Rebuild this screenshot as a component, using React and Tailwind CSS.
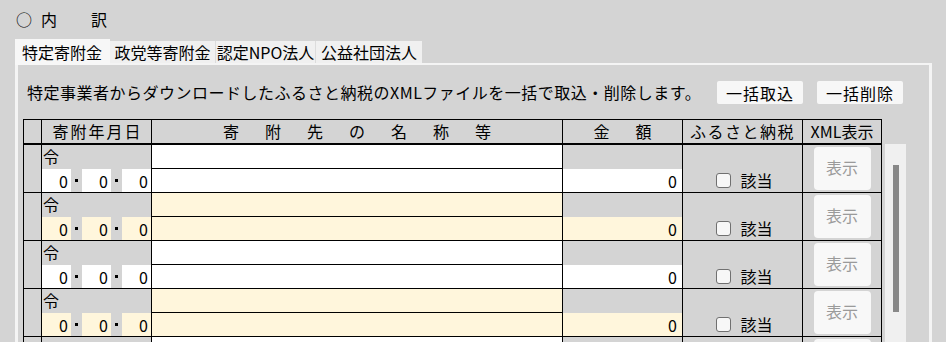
import React from 'react';

const font = { fontFamily: '"Noto Sans CJK JP", "Noto Sans", sans-serif' };

function DateInputs({ cream, empty }) {
  const box = cream ? 'bg-[#fff6dc]' : 'bg-white';
  const Box = () => (
    <div className={`w-[29px] h-full ${box} flex items-center justify-end pr-[3px] text-[16px] leading-none`}>{empty ? '' : '0'}</div>
  );
  const Dot = () => (
    <div className="w-[11px] h-full flex items-center justify-center">
      <span className="block w-[3px] h-[3px] bg-black" />
    </div>
  );
  return (
    <div className="flex h-[23px]">
      <Box />
      <Dot />
      <Box />
      <Dot />
      <Box />
    </div>
  );
}

function Row({ cream, empty }) {
  const fill = cream ? 'bg-[#fff6dc]' : 'bg-white';
  return (
    <div className="flex h-[48px] border-b border-black">
      <div className="w-[18px] border-r border-black" />
      <div className="w-[110px] border-r border-black flex flex-col">
        <div className="h-[24px] pl-[1px] text-[16px] leading-[22px]">{empty ? '' : '令'}</div>
        <DateInputs cream={cream} empty={empty} />
      </div>
      <div className="w-[411px] border-r border-black flex flex-col">
        <div className={`h-[24px] border-b border-black ${fill}`} />
        <div className={`h-[23px] ${fill}`} />
      </div>
      <div className="w-[120px] border-r border-black flex flex-col">
        <div className="h-[24px]" />
        <div className={`h-[23px] ${fill} flex items-center justify-end pr-[5px] text-[16px] leading-none`}>{empty ? '' : '0'}</div>
      </div>
      <div className="w-[120px] border-r border-black flex items-end justify-center pb-[2px]">
        {!empty && (
          <div className="flex items-center gap-[9px] pl-[4px]">
            <span className="block w-[15px] h-[15px] rounded-[3px] border border-[#707070] bg-[#f7f7f7]" />
            <span className="text-[16px] leading-[20px]">該当</span>
          </div>
        )}
      </div>
      <div className="w-[79px] border-r border-black flex justify-center pt-[2px]">
        <div className="w-[57px] h-[43px] rounded-[4px] bg-[#f8f8f8] text-[#9a9a9a] text-[16px] flex items-center justify-center pb-[4px]">
          {empty ? '' : '表示'}
        </div>
      </div>
    </div>
  );
}

export default function App() {
  return (
    <div className="w-[946px] h-[342px] overflow-hidden bg-[#d4d4d4] text-black" style={font}>
      {/* title */}
      <div className="h-[39px] pt-[9px] flex items-start text-[16px] leading-[20px]">
        <span className="ml-[16px] w-[16px]">○</span>
        <span className="ml-[9px]">内</span>
        <span className="ml-[34px]">訳</span>
      </div>

      {/* tabs */}
      <div className="flex items-end h-[24px] ml-[15px] text-[16px] leading-none">
        <div className="w-[95px] h-[26px] -mb-[2px] bg-[#f7f7f7] flex items-center pl-[7px] pb-[1px]">特定寄附金</div>
        <div className="w-[106px] h-[22px] bg-[#f0f0f0] border-r border-[#dcdcdc] flex items-center justify-center">政党等寄附金</div>
        <div className="w-[100px] h-[22px] bg-[#f0f0f0] border-r border-[#dcdcdc] flex items-center justify-center">認定NPO法人</div>
        <div className="w-[106px] h-[22px] bg-[#f0f0f0] flex items-center justify-center">公益社団法人</div>
      </div>

      {/* panel */}
      <div className="ml-[15px] w-[917px] h-[300px] border-l-[3px] border-t-2 border-r-[3px] border-[#f4f4f4] pl-[5px]">
        <div className="h-[54px] flex items-center pb-[1px]">
          <div className="pl-[4px] text-[16px] tracking-[0.5px] leading-none">
            特定事業者からダウンロードしたふるさと納税のXMLファイルを一括で取込・削除します。
          </div>
          <div className="ml-auto mr-[26px] flex gap-[14px] mt-[2px]">
            <div className="w-[86px] h-[23px] rounded-[2px] bg-[#f7f7f7] text-[16px] flex items-center justify-center tracking-[1px]">一括取込</div>
            <div className="w-[86px] h-[23px] rounded-[2px] bg-[#f7f7f7] text-[16px] flex items-center justify-center tracking-[1px]">一括削除</div>
          </div>
        </div>

        <div className="flex items-start">
          <div className="w-[859px] border-l border-t border-r-0 border-black">
            {/* header */}
            <div className="flex h-[25px] border-b-2 border-black text-[16px] leading-[23px]">
              <div className="w-[18px] border-r border-black" />
              <div className="w-[110px] border-r border-black text-center tracking-[2px] pl-[2px]">寄附年月日</div>
              <div className="w-[411px] border-r border-black text-center tracking-[26px] pl-[26px]">寄附先の名称等</div>
              <div className="w-[120px] border-r border-black text-center tracking-[26px] pl-[26px]">金額</div>
              <div className="w-[120px] border-r border-black text-center tracking-[1.5px]">ふるさと納税</div>
              <div className="w-[79px] border-r border-black text-center">XML表示</div>
            </div>
            <Row cream={false} />
            <Row cream={true} />
            <Row cream={false} />
            <Row cream={true} />
            <Row cream={false} empty />
          </div>
          <div className="ml-[3px] mt-[25px] w-[21px] h-[220px] bg-[#f0f0f0] pt-[21px] flex justify-center">
            <div className="w-[6px] h-[147px] bg-[#888888]" />
          </div>
        </div>
      </div>
    </div>
  );
}
